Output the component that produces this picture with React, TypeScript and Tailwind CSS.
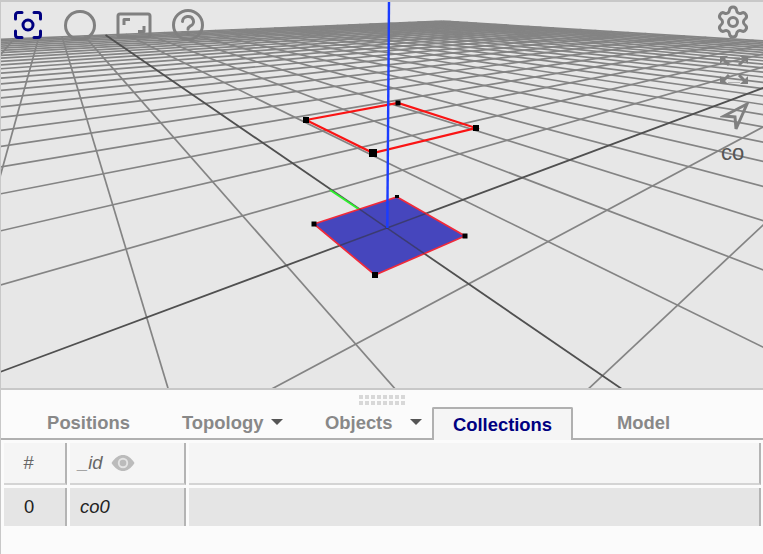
import { Settings } from "lucide-react";

// ground plane projection, taken from the two vanishing points of the grid
const origin = { x: 387, y: 228 };
const vpU = { x: 1005, y: -2 };
const vpV = { x: 50, y: -3 };
const a = 0.14;
const b = 0.195;
const N = 26;

function project(u: number, v: number) {
  const au = a * u;
  const bv = b * v;
  const w = 1 + au + bv;
  return {
    x: (origin.x + au * vpU.x + bv * vpV.x) / w,
    y: (origin.y + au * vpU.y + bv * vpV.y) / w,
  };
}

function segU(u: number) {
  // v runs along the line, keep it in front of the camera
  const vMin = Math.max(-N, (0.03 - 1 - a * u) / b);
  const p = project(u, vMin);
  const q = project(u, N);
  return { x1: p.x, y1: p.y, x2: q.x, y2: q.y };
}

function segV(v: number) {
  const uMin = Math.max(-N, (0.03 - 1 - b * v) / a);
  const p = project(uMin, v);
  const q = project(N, v);
  return { x1: p.x, y1: p.y, x2: q.x, y2: q.y };
}

const steps = Array.from({ length: N * 2 + 1 }, (_, i) => i - N);

function Scene() {
  return (
    <svg viewBox="1 2 762 386" className="block w-full h-full blur-[0.4px]">
      {steps.filter((s) => s !== 0).map((s) => (
        <g key={s} stroke="#848484" strokeWidth="1.7">
          <line {...segU(s)} />
          <line {...segV(s)} />
        </g>
      ))}
      <line {...segU(0)} stroke="#505050" strokeWidth="1.8" />
      <line {...segV(0)} stroke="#505050" strokeWidth="1.8" />
      <line x1="330" y1="190" x2="387" y2="228" stroke="#2ff02f" strokeWidth="2" />
      <polygon points="314,224 397,197 465,236 375,275" fill="#4646bd" stroke="#f02a3a" strokeWidth="1.7" />
      {/* axes still show through the filled face */}
      <line {...segU(0)} stroke="#333" strokeWidth="1.5" strokeOpacity="0.55" strokeDasharray="0" clipPath="url(#face)" />
      <line {...segV(0)} stroke="#333" strokeWidth="1.5" strokeOpacity="0.55" clipPath="url(#face)" />
      <clipPath id="face">
        <polygon points="314,224 397,197 465,236 375,275" />
      </clipPath>
      <polygon points="306,120 398,103 476,128 373,153" fill="none" stroke="#fa1414" strokeWidth="2.2" />
      <line x1="389" y1="0" x2="387.3" y2="228" stroke="#1a3cff" strokeWidth="2.4" />
      <rect x="303" y="117" width="6" height="6" fill="#000" />
      <rect x="395.5" y="100.5" width="5" height="5" fill="#000" />
      <rect x="473" y="125" width="6" height="6" fill="#000" />
      <rect x="369" y="149" width="8" height="8" fill="#000" />
      <rect x="311.5" y="221.5" width="5" height="5" fill="#000" />
      <rect x="395" y="195" width="4" height="3" fill="#000" />
      <rect x="462.5" y="233.5" width="5" height="5" fill="#000" />
      <rect x="372" y="272" width="6" height="6" fill="#000" />
    </svg>
  );
}

function FocusIcon() {
  return (
    <svg width="30" height="30" viewBox="0 0 30 30" fill="none" stroke="#000080" strokeWidth="3" strokeLinecap="round" strokeLinejoin="round">
      <path d="M9 2.5H5a2.5 2.5 0 0 0-2.5 2.5v4" />
      <path d="M21 2.5h4a2.5 2.5 0 0 1 2.5 2.5v4" />
      <path d="M9 27.5H5a2.5 2.5 0 0 1-2.5-2.5v-4" />
      <path d="M21 27.5h4a2.5 2.5 0 0 0 2.5-2.5v-4" />
      <circle cx="15" cy="15" r="5" />
    </svg>
  );
}

function ScreenIcon() {
  return (
    <svg width="36" height="27" viewBox="0 0 36 27" fill="none" stroke="#808080" strokeWidth="3" strokeLinejoin="round">
      <rect x="2" y="2" width="32" height="23" rx="2" />
      <path d="M8 13V7.5h6" />
      <path d="M28 14v5.5h-6" />
    </svg>
  );
}

function HelpIcon() {
  return (
    <svg width="32" height="32" viewBox="0 0 32 32" fill="none" stroke="#808080" strokeWidth="3" strokeLinecap="round">
      <circle cx="16" cy="16" r="14.5" />
      <path d="M10.5 12.5a5.5 5 0 1 1 8 4.4c-1.7 1-2.5 1.8-2.5 3.4" />
      <path d="M16 25v.3" />
    </svg>
  );
}

function ExpandIcon() {
  return (
    <svg width="28" height="28" viewBox="0 0 28 28" fill="#808080" stroke="#808080">
      <path d="M0 0h8L0 8z" stroke="none" />
      <path d="M28 0h-8l8 8z" stroke="none" />
      <path d="M0 28h8l-8-8z" stroke="none" />
      <path d="M28 28h-8l8-8z" stroke="none" />
      <path d="M3 3l6 6M25 3l-6 6M3 25l6-6M25 25l-6-6" strokeWidth="3" fill="none" />
      <path d="M8 1.500h12M8 26.500h12" strokeWidth="1" strokeOpacity="0.5" fill="none" />
    </svg>
  );
}

function SendIcon() {
  return (
    <svg width="30" height="30" viewBox="0 0 30 30" fill="none" stroke="#808080" strokeWidth="3" strokeLinejoin="miter">
      <path d="M27 2 4 14l11 1 1 12z" />
    </svg>
  );
}

function EyeFilled() {
  return (
    <svg width="24" height="18" viewBox="0 0 24 18">
      <path d="M0.500 9C4 3.500 8 1 12 1s8 2.500 11.500 8C20 14.500 16 17 12 17S4 14.500 0.500 9z" fill="#bbb" />
      <circle cx="12" cy="9" r="5.200" fill="#e4e4e4" />
      <circle cx="12" cy="9" r="3.300" fill="#bbb" />
    </svg>
  );
}

function Caret() {
  return <span className="inline-block w-0 h-0 border-x-[6px] border-x-transparent border-t-[6px] border-t-[#555]" />;
}

function Cell({ className, children }: { className: string; children?: React.ReactNode }) {
  return (
    <div className={`flex items-center border-r-2 border-r-[#b4b4b4] ${className}`}>
      {children}
    </div>
  );
}

export default function App() {
  return (
    <div className="w-[763px] h-[554px] overflow-hidden bg-[#fbfbfb] border-l border-l-[#c8c8c8] text-[18.400px] font-['Liberation_Sans',Arial,sans-serif]">
      <div className="relative h-[388px] bg-[#e7e7e7] border-t-2 border-t-[#c8c8c8]">
        <Scene />
        <div className="absolute left-[12px] top-[7px] flex items-center h-[32px]">
          <FocusIcon />
          <div className="ml-[21px] w-[32px] h-[31px] rounded-full border-[3px] border-[#808080]" />
          <div className="ml-[20px]"><ScreenIcon /></div>
          <div className="ml-[20px]"><HelpIcon /></div>
        </div>
        <Settings className="absolute left-[714px] top-[2px] text-[#808080]" size={36} strokeWidth={2} />
        <div className="absolute left-[719px] top-[54px]"><ExpandIcon /></div>
        <div className="absolute left-[719px] top-[100px]"><SendIcon /></div>
        <span className="absolute left-[720px] top-[138px] text-[22px] leading-[26px] text-[#555]">co</span>
      </div>

      <div className="border-t-2 border-t-[#c8c8c8]">
        <div className="grid grid-cols-8 gap-[2px] w-[46px] ml-[358px] mt-[5px]">
          {Array.from({ length: 16 }, (_, i) => (
            <span key={i} className="w-[4px] h-[4px] bg-[#d8d8d8]" />
          ))}
        </div>
        <div className="flex h-[33px] mt-[2px] pl-[17px] border-b-2 border-b-[#b0b0b0] font-bold text-[#888] leading-[31px]">
          <div className="w-[141px] text-center">Positions</div>
          <div className="w-[132px] pl-[23px] flex items-center gap-[8px] h-[30px]">Topology <Caret /></div>
          <div className="w-[141px] pl-[34px] flex items-center gap-[18px] h-[30px]">Objects <Caret /></div>
          <div className="w-[141px] h-[33px] text-center text-[#000080] bg-[#f5f5f5] border-2 border-b-0 border-[#b0b0b0] rounded-t-[2px]">Collections</div>
          <div className="w-[141px] text-center">Model</div>
        </div>

        <div className="pl-[3px] pt-[3px]">
          <div className="flex gap-[3px] h-[42px] text-[#666]">
            <Cell className="w-[63px] justify-center bg-[#f5f5f5] border-b-2 border-b-[#d4d4d4] pr-[12px]">#</Cell>
            <Cell className="w-[116px] pl-[8px] bg-[#f5f5f5] border-b-2 border-b-[#d4d4d4] italic">
              _id
              <span className="ml-[8px]"><EyeFilled /></span>
            </Cell>
            <Cell className="w-[572px] bg-[#f5f5f5] border-b-2 border-b-[#d4d4d4]" />
          </div>
          <div className="flex gap-[3px] h-[38px] mt-[3px] text-[#222]">
            <Cell className="w-[63px] justify-center bg-[#e5e5e5] pr-[11px]">0</Cell>
            <Cell className="w-[116px] pl-[10px] bg-[#e5e5e5] italic">co0</Cell>
            <Cell className="w-[572px] bg-[#e5e5e5]" />
          </div>
        </div>
      </div>
    </div>
  );
}
